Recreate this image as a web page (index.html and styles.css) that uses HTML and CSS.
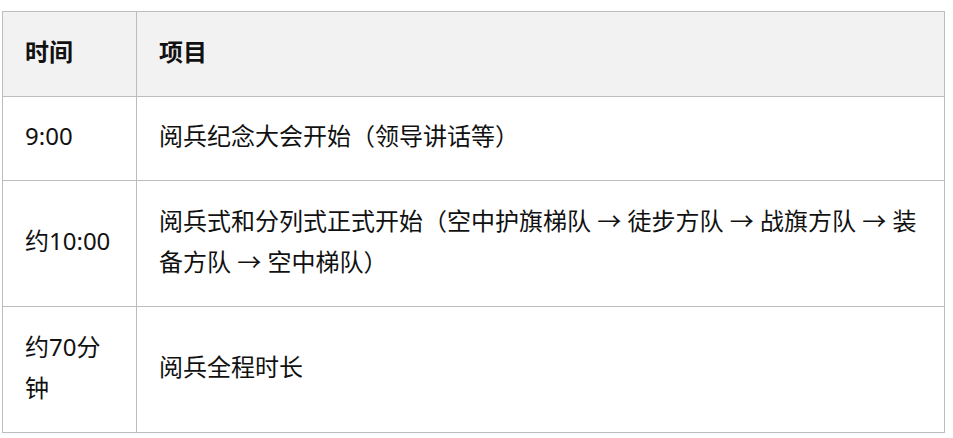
FILE: index.html
```html
<!DOCTYPE html>
<html lang="zh-CN">
<head>
<meta charset="utf-8">
<title>阅兵时间表</title>
<link rel="stylesheet" href="styles.css">
</head>
<body>
<table class="schedule">
  <thead>
    <tr>
      <th class="col-time">时间</th>
      <th>项目</th>
    </tr>
  </thead>
  <tbody>
    <tr>
      <td>9:00</td>
      <td>阅兵纪念大会开始（领导讲话等）</td>
    </tr>
    <tr>
      <td>约10:00</td>
      <td>阅兵式和分列式正式开始（空中护旗梯队 → 徒步方队 → 战旗方队 → 装备方队 → 空中梯队）</td>
    </tr>
    <tr>
      <td>约70分钟</td>
      <td>阅兵全程时长</td>
    </tr>
  </tbody>
</table>
</body>
</html>
```

FILE: styles.css
```css
html, body {
  margin: 0;
  padding: 0;
  background: #ffffff;
}

body {
  font-family: "Noto Sans", "Noto Sans CJK SC", sans-serif;
  font-size: 24px;
  color: #111111;
}

.schedule {
  margin: 11px 0 0 2px;
  width: 943px;
  border-collapse: collapse;
  table-layout: fixed;
}

.schedule th,
.schedule td {
  border: 1px solid #bdbdbd;
  padding: 18.5px 22px 23.5px;
  line-height: 41.5px;
  text-align: left;
  vertical-align: middle;
}

.schedule th {
  background: #f2f2f2;
  font-weight: 700;
}

.schedule .col-time {
  width: 89px;
}
```
